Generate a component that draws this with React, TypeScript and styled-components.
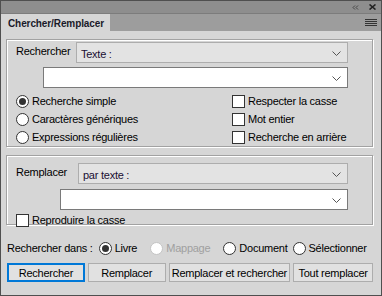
import React from "react";
import styled, { createGlobalStyle } from "styled-components";

const Global = createGlobalStyle`
  html, body { margin: 0; padding: 0; background: #d6d6d6; }
  * { box-sizing: border-box; }
`;

const Win = styled.div`
  width: 382px;
  height: 296px;
  border: 1px solid #4f4f4f;
  background: #d6d6d6;
  display: flex;
  flex-direction: column;
  font-family: "Liberation Sans", Arial, sans-serif;
  font-size: 11px;
  letter-spacing: -0.25px;
  color: #000;
  overflow: hidden;
`;

const TitleBar = styled.div`
  height: 12px;
  background: #8e8e8e;
  display: flex;
  align-items: center;
  justify-content: flex-end;
  gap: 10px;
  padding-right: 5px;
`;

const TabBar = styled.div`
  height: 18px;
  background: #9d9d9d;
  border-top: 1px solid #7c7c7c;
  display: flex;
  align-items: stretch;
  justify-content: space-between;
`;

const Tab = styled.div`
  width: 109px;
  background: #d6d6d6;
  font-weight: bold;
  font-size: 10px;
  letter-spacing: -0.1px;
  color: #1a1a2a;
  display: flex;
  align-items: center;
  padding-left: 7px;
  padding-top: 1px;
`;

const Menu = styled.div`
  display: flex;
  align-items: center;
  padding-right: 4px;
`;

const Body = styled.div`
  flex: 1;
  display: flex;
  flex-direction: column;
  padding: 8px 8px 0 5px;
`;

const Group = styled.div<{ $h: number; $mt?: number }>`
  height: ${(p) => p.$h}px;
  margin-top: ${(p) => p.$mt ?? 0}px;
  border: 1px solid #a2a2a2;
  box-shadow: 1px 1px 0 #fff, inset 1px 1px 0 #fff;
  padding: 2px 24px 0 9px;
  display: flex;
  flex-direction: column;
`;

const Row = styled.div<{ $mt?: number; $pl?: number }>`
  display: flex;
  align-items: flex-start;
  margin-top: ${(p) => p.$mt ?? 0}px;
  padding-left: ${(p) => p.$pl ?? 0}px;
`;

const Label = styled.div<{ $w: number }>`
  width: ${(p) => p.$w}px;
  padding-top: 3px;
  flex-shrink: 0;
`;

const Select = styled.div<{ $white?: boolean }>`
  flex: 1;
  height: 21px;
  background: ${(p) => (p.$white ? "#fff" : "#e3e3e3")};
  border: 1px solid ${(p) => (p.$white ? "#7a7a7a" : "#adadad")};
  display: flex;
  align-items: center;
  justify-content: space-between;
  padding: 2px 6px 0 4px;
  color: #1a0f33;
`;

const Options = styled.div<{ $mt: number }>`
  display: grid;
  grid-template-columns: 216px 1fr;
  grid-auto-rows: 18px;
  margin-top: ${(p) => p.$mt}px;
`;

const Opt = styled.label<{ $disabled?: boolean; $ml?: number }>`
  display: flex;
  align-items: center;
  gap: 3px;
  white-space: nowrap;
  margin-left: ${(p) => p.$ml ?? 0}px;
  color: ${(p) => (p.$disabled ? "#a0a0a0" : "#000")};
`;

const RadioDot = styled.span<{ $on?: boolean; $disabled?: boolean }>`
  width: 13px;
  height: 13px;
  border-radius: 50%;
  border: 1px solid ${(p) => (p.$disabled ? "#c4c4c4" : "#333")};
  background: #fff;
  display: inline-flex;
  align-items: center;
  justify-content: center;
  flex-shrink: 0;
  &::after {
    content: "";
    width: 7px;
    height: 7px;
    border-radius: 50%;
    background: ${(p) => (p.$on ? "#333" : "transparent")};
  }
`;

const Box = styled.span`
  width: 13px;
  height: 13px;
  border: 1px solid #333;
  background: #fff;
  flex-shrink: 0;
`;

const ScopeRow = styled.div`
  display: flex;
  align-items: center;
  height: 18px;
  margin-top: 14px;
  padding-left: 1px;
`;

const Buttons = styled.div`
  display: flex;
  gap: 3px;
  margin-top: 6px;
  padding-left: 1px;
`;

const Btn = styled.button<{ $w: number; $def?: boolean }>`
  width: ${(p) => p.$w}px;
  height: 19px;
  font-family: inherit;
  font-size: 11px;
  letter-spacing: -0.25px;
  color: #000;
  background: #e1e1e1;
  border: ${(p) => (p.$def ? "2px solid #0078d7" : "1px solid #adadad")};
  padding: 0;
`;

const Chevron = () => (
  <svg width="9" height="5" viewBox="0 0 9 5">
    <path d="M0.5 0.5 L4.5 4.5 L8.5 0.5" fill="none" stroke="#555" strokeWidth="1" />
  </svg>
);

const Radio = ({ on, disabled, ml, children }: { on?: boolean; disabled?: boolean; ml?: number; children: React.ReactNode }) => (
  <Opt $disabled={disabled} $ml={ml}>
    <RadioDot $on={on} $disabled={disabled} />
    {children}
  </Opt>
);

const Check = ({ children }: { children: React.ReactNode }) => (
  <Opt>
    <Box />
    {children}
  </Opt>
);

export default function App() {
  return (
    <>
      <Global />
      <Win>
        <TitleBar>
          <svg width="7" height="5" viewBox="0 0 7 5">
            <path d="M3 0.5 L1 2.5 L3 4.5 M6 0.5 L4 2.5 L6 4.5" fill="none" stroke="#444" strokeWidth="1" />
          </svg>
          <svg width="7" height="6" viewBox="0 0 7 6">
            <path d="M0.5 0.5 L6.5 5.5 M6.5 0.5 L0.5 5.5" fill="none" stroke="#222" strokeWidth="1.6" />
          </svg>
        </TitleBar>
        <TabBar>
          <Tab>Chercher/Remplacer</Tab>
          <Menu>
            <svg width="12" height="8" viewBox="0 0 12 8">
              <path d="M0 0.5 H12 M0 2.5 H12 M0 4.5 H12 M0 6.5 H12" stroke="#333" strokeWidth="1" />
            </svg>
          </Menu>
        </TabBar>
        <Body>
          <Group $h={108}>
            <Row>
              <Label $w={60}>Rechercher</Label>
              <Select>
                <span>Texte :</span>
                <Chevron />
              </Select>
            </Row>
            <Row $mt={4} $pl={27}>
              <Select $white>
                <span />
                <Chevron />
              </Select>
            </Row>
            <Options $mt={4}>
              <Radio on>Recherche simple</Radio>
              <Check>Respecter la casse</Check>
              <Radio>Caractères génériques</Radio>
              <Check>Mot entier</Check>
              <Radio>Expressions régulières</Radio>
              <Check>Recherche en arrière</Check>
            </Options>
          </Group>
          <Group $h={70} $mt={8}>
            <Row $mt={5}>
              <Label $w={62}>Remplacer</Label>
              <Select>
                <span>par texte :</span>
                <Chevron />
              </Select>
            </Row>
            <Row $mt={5} $pl={44}>
              <Select $white>
                <span />
                <Chevron />
              </Select>
            </Row>
            <Options $mt={1}>
              <Check>Reproduire la casse</Check>
            </Options>
          </Group>
          <ScopeRow>
            <span>Rechercher dans :</span>
            <Radio on ml={6}>Livre</Radio>
            <Radio disabled ml={13}>Mappage</Radio>
            <Radio ml={13}>Document</Radio>
            <Radio ml={5}>Sélectionner</Radio>
          </ScopeRow>
          <Buttons>
            <Btn $w={78} $def>Rechercher</Btn>
            <Btn $w={78}>Remplacer</Btn>
            <Btn $w={122}>Remplacer et rechercher</Btn>
            <Btn $w={80}>Tout remplacer</Btn>
          </Buttons>
        </Body>
      </Win>
    </>
  );
}
